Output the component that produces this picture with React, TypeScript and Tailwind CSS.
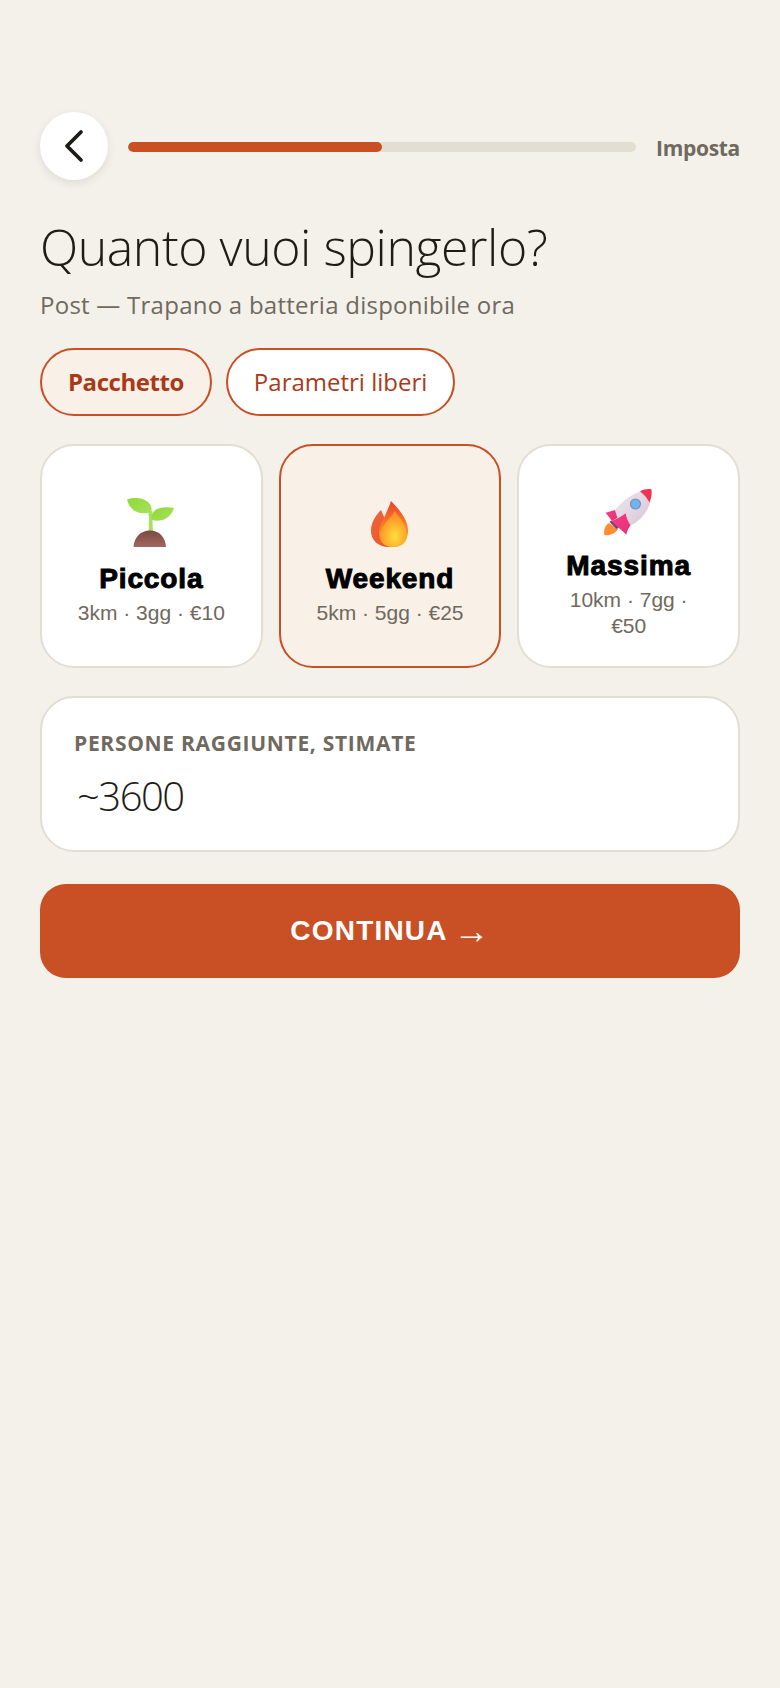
import { ChevronLeft } from 'lucide-react'

function SproutIcon() {
  return (
    <svg viewBox="16 12 52 54" className="w-[52px] h-[54px]">
      <defs>
        <linearGradient id="leaf" x1="0" y1="0" x2="1" y2="1">
          <stop offset="0" stopColor="#8fd93a" />
          <stop offset="1" stopColor="#a9e05a" />
        </linearGradient>
        <linearGradient id="soil" x1="0" y1="0" x2="0" y2="1">
          <stop offset="0" stopColor="#7c4a42" />
          <stop offset="1" stopColor="#a0675f" />
        </linearGradient>
      </defs>
      <path d="M39 26 C40.5 34 40 40 39.5 47 L44 47 C43.6 40 43.4 34 43.5 26 Z" fill="#a6e35c" />
      <path d="M18 14.5 C22 12.5 34 11.5 40 18 C43 21.5 43 25 42 27 C33 30.5 21 27.5 18 14.5 Z" fill="url(#leaf)" />
      <path d="M65 23 C58 21.5 48 21.5 44 27.5 C42 31 42 33 43 35 C52 37.5 62 33.5 65 23 Z" fill="url(#leaf)" />
      <path d="M24.5 62 C25 52 32 45.5 41 45.5 C50 45.5 56.5 52 57 62 Z" fill="url(#soil)" />
    </svg>
  )
}

function FlameIcon() {
  return (
    <svg viewBox="12 10 44 54" className="w-[44px] h-[54px]">
      <defs>
        <linearGradient id="flameBack" x1="0" y1="0" x2="1" y2="1">
          <stop offset="0" stopColor="#f0653a" />
          <stop offset="1" stopColor="#e8562a" />
        </linearGradient>
        <linearGradient id="flameMid" x1="0.5" y1="0" x2="0.5" y2="1">
          <stop offset="0" stopColor="#ee3f2c" />
          <stop offset="0.5" stopColor="#fb7a25" />
          <stop offset="1" stopColor="#ff9a22" />
        </linearGradient>
        <radialGradient id="flameCore" cx="0.55" cy="0.7" r="0.6">
          <stop offset="0" stopColor="#ffdf3a" />
          <stop offset="1" stopColor="#fb8f28" />
        </radialGradient>
      </defs>
      <path d="M25 23 C19 29 15 36 15 44 C15 53 22 60 33 60 L38 60 L38 30 L29 32 Z" fill="url(#flameBack)" />
      <path d="M35 14 C33 20 31 24 28 31 C24 37 23 42 23 47 C23 55 29 60 37 60 C46 60 52 53 52 44 C52 33 44 23 35 14 Z" fill="url(#flameMid)" />
      <path d="M39 24 C34 32 24 39 24 49 C24 56 30 60 38 60 C46 60 51 55 51 48 C51 37 44 32 39 24 Z" fill="url(#flameCore)" />
    </svg>
  )
}

function RocketIcon() {
  return (
    <svg viewBox="9 10 52 52" className="w-[52px] h-[52px]">
      <defs>
        <linearGradient id="hull" x1="0" y1="0" x2="1" y2="1">
          <stop offset="0" stopColor="#eee6ee" />
          <stop offset="1" stopColor="#d9c6d6" />
        </linearGradient>
        <linearGradient id="fin" x1="0" y1="0" x2="1" y2="1">
          <stop offset="0" stopColor="#f43f7c" />
          <stop offset="1" stopColor="#e8307f" />
        </linearGradient>
      </defs>
      <path d="M15 47 C10 50 9.5 56 10.5 59 C15 60 21 58 24 53 Z" fill="#f98f32" />
      <path d="M11.7 36.7 L21 34 L25 41 L18 45 Z" fill="url(#fin)" />
      <path d="M46.7 15 C36 19 26 27 21 34 L24 44 L36.7 49.3 C45 46 54 36 56.7 25 Z" fill="url(#hull)" />
      <path d="M16.7 45 C22 43.5 27 41 31.7 37.3 C32.5 42 34 46 36.7 49.3 C34.5 52 33 55 32.3 58.7 C29 55 26 53 23.3 50.7 Z" fill="url(#fin)" />
      <path d="M15.5 46 L17 44.8 L24.5 51.5 L22.8 53 Z" fill="#6e3a8c" />
      <path d="M46 15.5 C50 13 55 12.5 57.5 13.5 C58 17 57.5 22 55.5 26.5 C53 22 50 18 46 15.5 Z" fill="#f2304f" />
      <circle cx="41.5" cy="28" r="5.6" fill="#7f93b8" />
      <circle cx="41.5" cy="28" r="4.2" fill="#6db4fa" />
    </svg>
  )
}

function PackCard({ icon, title, details, selected }: { icon: React.ReactNode; title: string; details: string; selected?: boolean }) {
  return (
    <div className={selected
      ? 'h-[224px] rounded-[34px] border-2 border-[#c94f25] bg-[#f9f1e8] flex flex-col items-center justify-center px-[30px] text-center'
      : 'h-[224px] rounded-[34px] border-2 border-[#e3ded2] bg-white flex flex-col items-center justify-center px-[30px] text-center'}>
      <div className="h-[65px] flex items-end justify-center">{icon}</div>
      <div className="mt-[9px] font-['Liberation_Sans',sans-serif] font-bold text-[28px] leading-[38px] text-black [-webkit-text-stroke:1px_black] tracking-[0.9px]">{title}</div>
      <div className="mt-[2px] font-['Liberation_Sans',sans-serif] text-[21px] leading-[26px] text-[#6f695e] whitespace-pre-line">{details}</div>
    </div>
  )
}

export default function App() {
  return (
    <div className="min-h-[1688px] bg-[#f4f1ea] px-[40px] pt-[112px] font-['Open_Sans',sans-serif]">
      <div className="flex items-center gap-[20px]">
        <button className="w-[68px] h-[68px] rounded-full bg-white shadow-[0_3px_10px_rgba(0,0,0,0.09)] flex items-center justify-center shrink-0">
          <ChevronLeft className="w-[56px] h-[56px] text-[#1f1c18]" strokeWidth={1.6} />
        </button>
        <div className="flex-1 h-[10px] mt-[2px] rounded-full bg-[#e3ded2] overflow-hidden">
          <div className="w-1/2 h-full rounded-full bg-[#c94f25]" />
        </div>
        <span className="text-[#6f695e] font-bold text-[21px] tracking-[-0.3px] leading-[28px] pt-[4px]">Imposta</span>
      </div>

      <h1 className="mt-[36px] text-[50px] leading-[62px] font-light text-[#1f1c18] tracking-[-0.45px]">Quanto vuoi spingerlo?</h1>
      <p className="mt-[10px] text-[24px] leading-[34px] text-[#6f695e] font-normal tracking-[0.25px]">Post — Trapano a batteria disponibile ora</p>

      <div className="mt-[26px] flex gap-[14px]">
        <button className="h-[68px] px-[26px] rounded-full border-2 border-[#c94f25] bg-[#f9f1e8] text-[#a93a18] font-bold text-[24px] tracking-[-0.45px]">Pacchetto</button>
        <button className="h-[68px] px-[26px] rounded-full border-2 border-[#c94f25] bg-white text-[#a93a18] font-medium text-[24px] tracking-[0px]">Parametri liberi</button>
      </div>

      <div className="mt-[28px] grid grid-cols-3 gap-[16px]">
        <PackCard icon={<SproutIcon />} title="Piccola" details="3km · 3gg · €10" />
        <PackCard icon={<FlameIcon />} title="Weekend" details="5km · 5gg · €25" selected />
        <PackCard icon={<RocketIcon />} title="Massima" details={'10km · 7gg ·\n€50'} />
      </div>

      <div className="mt-[28px] h-[156px] rounded-[34px] border-2 border-[#e3ded2] bg-white pl-[32px] pt-[31px]">
        <div className="text-[21px] leading-[28px] font-bold text-[#6f695e] tracking-[0.7px]">PERSONE RAGGIUNTE, STIMATE</div>
        <div className="mt-[12px] pl-[3px] text-[40px] leading-[54px] font-light text-[#1f1c18] tracking-[-1.5px]">~3600</div>
      </div>

      <button className="mt-[32px] w-full h-[94px] rounded-[26px] bg-[#c94f25] text-white font-['Liberation_Sans',sans-serif] font-bold text-[28px] tracking-[1.2px] flex items-center justify-center gap-[6px]">
        <span>CONTINUA</span>
        <span className="font-normal text-[36px] leading-[28px] tracking-normal">→</span>
      </button>
    </div>
  )
}
